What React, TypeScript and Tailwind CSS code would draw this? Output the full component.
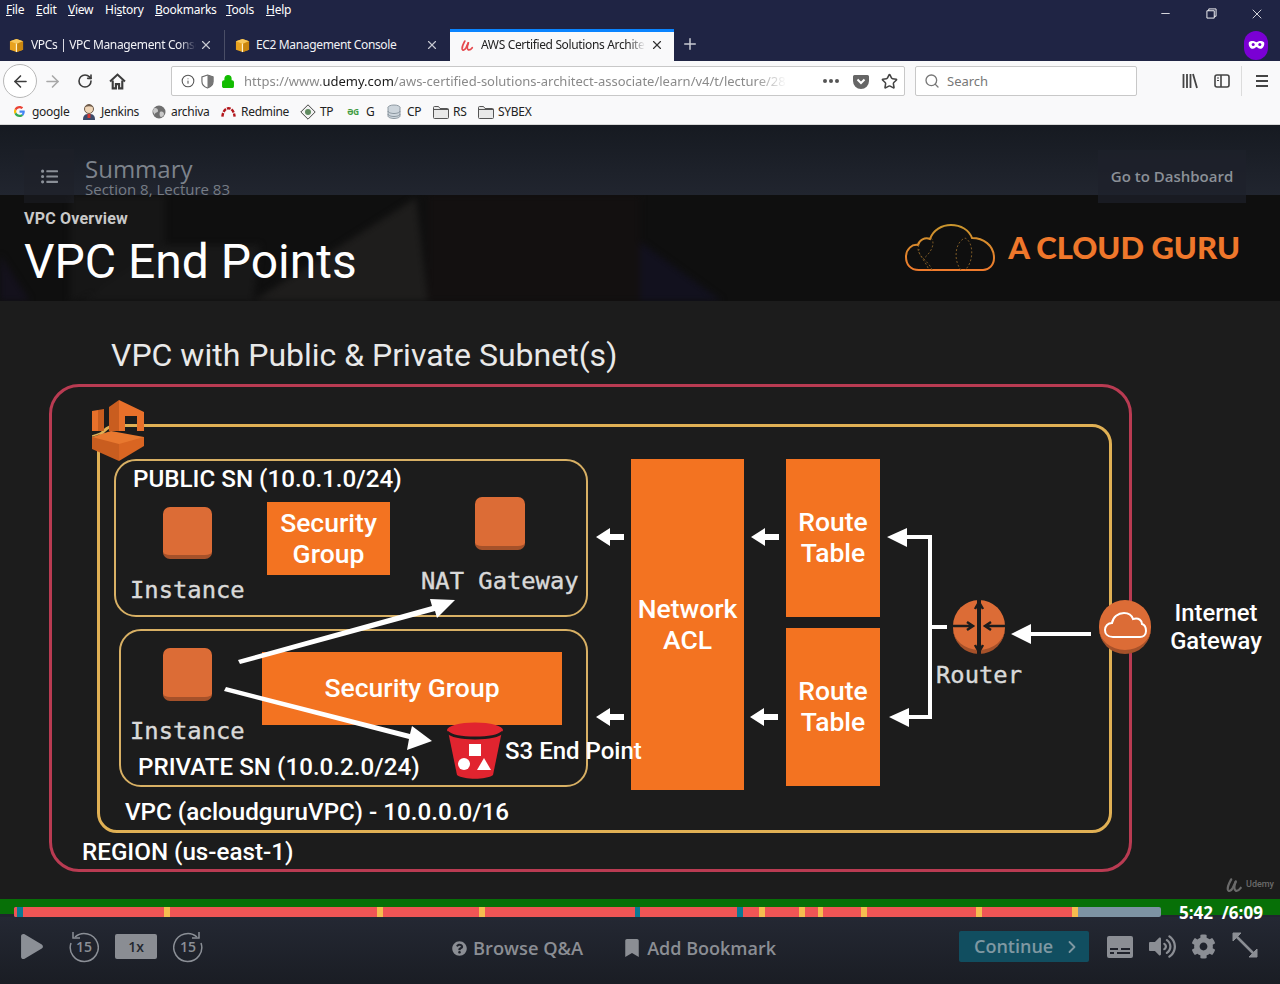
import React from 'react';
import { ArrowLeft, ArrowRight, RotateCw, Info, Lock, Star, Search, X, Plus, Minus, ChevronRight } from 'lucide-react';
import { FaBookmark, FaCog, FaListUl, FaPlay, FaQuestionCircle, FaVolumeUp } from 'react-icons/fa';

const chromeFont = "font-['Noto_Sans',sans-serif]";

function Box3d({ className }: { className: string }) {
  return (
    <svg viewBox="0 0 16 16" className={className}>
      <path d="M8 1 15 3.500V12.500L8 15 1 12.500V3.500Z" fill="#e8a21f" />
      <path d="M8 1 15 3.500 8 6 1 3.500Z" fill="#f7c85c" />
      <path d="M7.300 6H8.700V15H7.300Z" fill="#fff3cf" />
      <path d="M8.700 6 15 3.500V12.500L8.700 15Z" fill="#c9860f" />
    </svg>
  );
}

function UdemyMark({ className, color }: { className: string; color: string }) {
  return (
    <svg viewBox="0 0 16 14" className={className} fill="none" stroke={color} strokeWidth="2" strokeLinecap="round">
      <path d="M5.500 2 C4 5 2 8 2.500 11 C3 13 5.500 12.500 7 9.500 L9.500 4" />
      <path d="M9.500 4 C8 8 8 11 9.500 12 C11 12.500 12.500 11.500 14 9.500" />
    </svg>
  );
}

function Folder() {
  return (
    <svg viewBox="0 0 16 14" className="w-4 h-[14px]" fill="#e9e9e9" stroke="#555" strokeWidth="1">
      <path d="M.5 2.500a1 1 0 0 1 1-1h4l1.500 2h7.500a1 1 0 0 1 1 1v8a1 1 0 0 1-1 1h-13a1 1 0 0 1-1-1Z" />
      <path d="M.5 4.500h15" />
    </svg>
  );
}

function MenuBar() {
  const items = [
    ['F', 'ile', 'w-[30px]'],
    ['E', 'dit', 'w-[32px]'],
    ['V', 'iew', 'w-[37px]'],
    ['Hi', 'story', 'w-[50px]'],
    ['B', 'ookmarks', 'w-[71px]'],
    ['T', 'ools', 'w-[40px]'],
    ['H', 'elp', 'w-[30px]'],
  ];
  return (
    <div className="h-[29px] flex items-start">
      <div className="flex pl-[6px] pt-[1px] text-[12px] leading-[17px] tracking-[-0.25px] text-white">
        {items.map(([a, b, w], i) => (
          <span key={i} className={w}>
            {a === 'Hi' ? (
              <>
                Hi<span className="underline">s</span>tory
              </>
            ) : (
              <>
                <span className="underline">{a}</span>
                {b}
              </>
            )}
          </span>
        ))}
      </div>
      <div className="ml-auto flex items-center h-[29px] text-white">
        <div className="w-[46px] flex justify-center pb-[2px]">
          <Minus className="w-[13px] h-[13px]" strokeWidth={1.500} />
        </div>
        <div className="w-[46px] flex justify-center pb-[2px]">
          <svg viewBox="0 0 12 12" className="w-[11px] h-[11px]" fill="none" stroke="#fff" strokeWidth="1">
            <path d="M3 3V1h8v8H9" />
            <path d="M1 3h8v8H1Z" />
          </svg>
        </div>
        <div className="w-[46px] flex justify-center pb-[2px]">
          <X className="w-[16px] h-[16px]" strokeWidth={1.200} />
        </div>
      </div>
    </div>
  );
}

function TabStrip() {
  return (
    <div className="h-[32px] flex items-stretch text-[12px] tracking-[-0.35px]">
      <div className="w-[225px] flex items-center pl-[9px] border-r border-[#4a4e66] my-[1px] text-[#f2f2f6]">
        <Box3d className="w-[15px] h-[15px] shrink-0" />
        <span className="ml-[7px] w-[165px] overflow-hidden whitespace-nowrap [mask-image:linear-gradient(to_right,#000_90%,transparent)]">
          VPCs | VPC Management Console
        </span>
        <X className="w-[14px] h-[14px] text-[#c5c7d0] ml-[3px] shrink-0" strokeWidth={2} />
      </div>
      <div className="w-[225px] flex items-center pl-[10px] text-[#f2f2f6]">
        <Box3d className="w-[15px] h-[15px] shrink-0" />
        <span className="ml-[6px] w-[169px] whitespace-nowrap">EC2 Management Console</span>
        <X className="w-[14px] h-[14px] text-[#c5c7d0] shrink-0" strokeWidth={2} />
      </div>
      <div className="w-[224px] bg-[#f9f9fa] border-t-[3px] border-[#0a84ff] flex items-center pl-[10px] pb-[3px] text-[#222]">
        <UdemyMark className="w-[14px] h-[13px] shrink-0" color="#e5484d" />
        <span className="ml-[7px] w-[164px] overflow-hidden whitespace-nowrap [mask-image:linear-gradient(to_right,#000_90%,transparent)]">
          AWS Certified Solutions Architect
        </span>
        <X className="w-[14px] h-[14px] text-[#333] ml-[5px] shrink-0" strokeWidth={2} />
      </div>
      <div className="w-[32px] flex items-center justify-center pb-[2px]">
        <Plus className="w-[18px] h-[18px] text-[#c9cad2]" strokeWidth={2} />
      </div>
      <div className="ml-auto mr-[12px] flex items-center">
        <div className="w-[24px] h-[29px] rounded-full bg-[#7a00d4] flex items-center justify-center">
          <svg viewBox="0 0 18 10" className="w-[17px] h-[10px]">
            <path d="M1 2c3-2 5-1 8 0 3-1 5-2 8 0 1 3-1 7-4 7-2 0-3-2-4-2s-2 2-4 2C2 9 0 5 1 2Z" fill="#fff" />
            <circle cx="5.500" cy="4.500" r="1.600" fill="#7a00d4" />
            <circle cx="12.500" cy="4.500" r="1.600" fill="#7a00d4" />
          </svg>
        </div>
      </div>
    </div>
  );
}

function NavBar() {
  return (
    <div className="h-[36px] pt-[4px] flex items-center text-[#444]">
      <div className="ml-[3px] w-[34px] h-[34px] rounded-full border border-[#b8b8b8] bg-white flex items-center justify-center">
        <ArrowLeft className="w-[19px] h-[19px] text-[#3c3c3c]" strokeWidth={2} />
      </div>
      <ArrowRight className="ml-[6px] w-[19px] h-[19px] text-[#a8a8a8]" strokeWidth={2} />
      <RotateCw className="ml-[15px] w-[16px] h-[16px] text-[#3c3c3c]" strokeWidth={2.400} />
      <svg viewBox="0 0 16 16" className="ml-[16px] w-[17px] h-[17px]" fill="none" stroke="#3c3c3c" strokeWidth="2">
        <path d="M1 8 8 1.500 15 8" />
        <path d="M3.500 7v7.500h3v-4h3v4h3V7" />
      </svg>
      <div className="ml-[45px] w-[734px] h-[30px] bg-white border border-[#c8c8c8] rounded-[2px] flex items-center">
        <Info className="ml-[9px] w-[14px] h-[14px] text-[#555]" strokeWidth={1.800} />
        <svg viewBox="0 0 14 16" className="ml-[6px] w-[13px] h-[15px]">
          <path d="M7 1 13 3V8c0 4-3 6-6 7-3-1-6-3-6-7V3Z" fill="#fff" stroke="#666" strokeWidth="1.200" />
          <path d="M7 1 13 3V8c0 4-3 6-6 7Z" fill="#777" />
        </svg>
        <Lock className="ml-[7px] w-[14px] h-[15px] text-[#12bc00]" fill="#12bc00" strokeWidth={2.400} />
        <span className="ml-[9px] mt-[2px] w-[543px] overflow-hidden whitespace-nowrap text-[13px] text-[#8a8a8a] [mask-image:linear-gradient(to_right,#000_94%,transparent)]">
          https://www.<span className="text-[#1a1a1a]">udemy.com</span>/aws-certified-solutions-architect-associate/learn/v4/t/lecture/2814
        </span>
        <div className="ml-[36px] flex gap-[2px]">
          <span className="w-[4px] h-[4px] rounded-full bg-[#555]" />
          <span className="w-[4px] h-[4px] rounded-full bg-[#555]" />
          <span className="w-[4px] h-[4px] rounded-full bg-[#555]" />
        </div>
        <svg viewBox="0 0 16 15" className="ml-[14px] w-[16px] h-[15px]">
          <path d="M1.500 1h13A1.500 1.500 0 0 1 16 2.500V7a8 8 0 0 1-16 0V2.500A1.500 1.500 0 0 1 1.500 1Z" fill="#666" />
          <path d="M4.500 5.500 8 9l3.500-3.500" stroke="#fff" strokeWidth="2" fill="none" />
        </svg>
        <Star className="ml-[12px] w-[17px] h-[17px] text-[#444]" strokeWidth={2.200} />
      </div>
      <div className="ml-[10px] w-[222px] h-[30px] bg-white border border-[#c8c8c8] rounded-[2px] flex items-center">
        <Search className="ml-[8px] w-[16px] h-[16px] text-[#777]" strokeWidth={2} />
        <span className="ml-[7px] mt-[2px] text-[13px] text-[#777]">Search</span>
      </div>
      <svg viewBox="0 0 16 16" className="ml-[45px] w-[16px] h-[16px]" fill="none" stroke="#444" strokeWidth="1.800">
        <path d="M1.500 1v14M5 1v14M8.500 1v14M11 1l4 14" />
      </svg>
      <svg viewBox="0 0 16 16" className="ml-[16px] w-[16px] h-[16px]" fill="none" stroke="#444" strokeWidth="1.600">
        <rect x="1" y="2" width="14" height="12" rx="2" />
        <path d="M7 2v12" />
        <path d="M3 5h2M3 7.500h2" strokeWidth="1" />
      </svg>
      <div className="ml-[11px] w-px h-[30px] bg-[#dcdcdc]" />
      <div className="ml-[14px] flex flex-col gap-[3px]">
        <span className="w-[12px] h-[2px] bg-[#444]" />
        <span className="w-[12px] h-[2px] bg-[#444]" />
        <span className="w-[12px] h-[2px] bg-[#444]" />
      </div>
    </div>
  );
}

function BookmarksBar() {
  return (
    <div className="h-[28px] flex items-center pt-[2px] border-b border-[#d8d8d8] text-[12px] tracking-[-0.3px] text-[#222] whitespace-nowrap">
      <div className="ml-[14px] w-[68px] flex items-center gap-[7px]">
        <svg viewBox="0 0 48 48" className="w-[11px] h-[11px] shrink-0">
          <path fill="#EA4335" d="M24 9.500c3.500 0 6.700 1.300 9.100 3.500l6.800-6.800C35.800 2.400 30.200 0 24 0 14.600 0 6.500 5.400 2.600 13.200l7.900 6.100C12.400 13.700 17.700 9.500 24 9.500Z" />
          <path fill="#4285F4" d="M47 24.500c0-1.600-.2-3.100-.4-4.500H24v9h12.900c-.6 3-2.200 5.500-4.700 7.200l7.700 6c4.500-4.200 7.100-10.400 7.100-17.700Z" />
          <path fill="#FBBC05" d="M10.500 28.700a14.500 14.500 0 0 1 0-9.300l-7.900-6.200a24 24 0 0 0 0 21.600l7.900-6.100Z" />
          <path fill="#34A853" d="M24 48c6.500 0 11.900-2.100 15.900-5.800l-7.700-6c-2.200 1.500-5 2.300-8.200 2.300-6.300 0-11.600-4.200-13.500-9.800l-7.900 6.100C6.500 42.600 14.600 48 24 48Z" />
        </svg>
        google
      </div>
      <div className="w-[70px] flex items-center gap-[5px]">
        <svg viewBox="0 0 14 16" className="w-[14px] h-[16px] shrink-0">
          <circle cx="7" cy="5" r="4.500" fill="#f0d6b8" stroke="#6d5a4a" />
          <path d="M3 3c1-3 7-3 8 0-3-1-5-1-8 0Z" fill="#6d5a4a" />
          <path d="M1 16c0-5 2-6 6-6s6 1 6 6Z" fill="#3d4a6a" />
          <path d="M5.500 10h3v4h-3Z" fill="#d33833" />
        </svg>
        Jenkins
      </div>
      <div className="w-[69px] flex items-center gap-[5px]">
        <svg viewBox="0 0 14 14" className="w-[14px] h-[14px] shrink-0">
          <circle cx="7" cy="7" r="6.500" fill="#6f6f6f" />
          <path d="M3 3c2 0 3 1 3 3S3 7 3 9 1 7 1 6s1-3 2-3ZM8 7c2-1 4 0 4 2s-2 3-3 3-2-3-1-5Z" fill="#c9c9c9" />
        </svg>
        archiva
      </div>
      <div className="w-[79px] flex items-center gap-[5px]">
        <svg viewBox="0 0 16 12" className="w-[15px] h-[12px] shrink-0" fill="none" stroke="#b3161b" strokeWidth="2.600" strokeDasharray="4 1.200">
          <path d="M1.500 11C2 5 5 2 8 2s6 3 6.500 9" />
        </svg>
        Redmine
      </div>
      <div className="w-[47px] flex items-center gap-[4px]">
        <svg viewBox="0 0 16 16" className="w-[16px] h-[16px] shrink-0">
          <path d="M8 .8 15.200 8 8 15.200.8 8Z" fill="#f2f2f2" stroke="#444" />
          <circle cx="8" cy="8" r="3" fill="#5f8a5f" />
        </svg>
        TP
      </div>
      <div className="w-[40px] flex items-center gap-[6px]">
        <span className="w-[13px] text-[8px] text-[#3f9b3f] font-bold leading-none shrink-0">ƏG</span>
        G
      </div>
      <div className="w-[46px] flex items-center gap-[6px]">
        <svg viewBox="0 0 14 16" className="w-[14px] h-[16px] shrink-0" fill="#cdd5dc" stroke="#7a8691" strokeWidth=".8">
          <ellipse cx="7" cy="3.500" rx="6" ry="2.500" />
          <path d="M1 3.500V12c0 1.500 3 2.500 6 2.500s6-1 6-2.500V3.500" />
          <path d="M1 7c0 1.500 3 2.500 6 2.500S13 8.500 13 7M1 10c0 1.500 3 2.500 6 2.500s6-1 6-2.500" fill="none" />
        </svg>
        CP
      </div>
      <div className="w-[45px] flex items-center gap-[4px]">
        <Folder />
        RS
      </div>
      <div className="flex items-center gap-[4px]">
        <Folder />
        SYBEX
      </div>
    </div>
  );
}

function LectureHeader() {
  return (
    <div className="h-[70px] bg-gradient-to-b from-[#161a21] to-[#21252f] flex font-['Open_Sans',sans-serif] relative">
      <div className="absolute left-[24px] top-[24px] w-[50px] h-[54px] bg-[#1d2028]/50 flex items-center justify-center z-10">
        <FaListUl className="w-[17px] h-[17px] text-[#8a8f97]" />
      </div>
      <div className="relative z-10 ml-[85px] pt-[32px]">
        <div className="text-[24px] leading-[24px] text-[#7d838c]">Summary</div>
        <div className="text-[15px] leading-[16px] text-[#767c85] whitespace-nowrap">Section 8, Lecture 83</div>
      </div>
      <div className="absolute left-[1098px] top-[25px] w-[148px] h-[53px] bg-[#1e212b]/70 flex items-center justify-center text-[15px] font-semibold text-[#8b9097] z-10">
        Go to Dashboard
      </div>
    </div>
  );
}

function SlideHeader() {
  return (
    <div className="h-[106px] bg-[#0f0f0f] relative overflow-hidden flex justify-between font-['Roboto',sans-serif]">
      {/* blurred speaker photo behind the slide title */}
      <svg viewBox="0 0 1280 106" className="absolute inset-0 w-[1280px] h-[106px] blur-[3px]">
        <path d="M70 0H165V60L75 106H70Z" fill="#161616" />
        <path d="M80 106 165 50H260L253 106Z" fill="#181818" />
        <path d="M253 106 416 3 428 106Z" fill="#1e1d1c" />
        <path d="M428 0H640V106H428Z" fill="#131010" />
        <path d="M0 106V60L30 106Z" fill="#14111c" />
        <path d="M640 47 722 106H640Z" fill="#12111e" />
      </svg>
      <div className="relative pl-[24px]">
        <div className="pt-[14px] text-[16px] leading-[20px] tracking-[0.2px] font-bold text-[#c9c9c9]">VPC Overview</div>
        <div className="mt-[6px] text-[48px] leading-[56px] -translate-y-px text-white">VPC End Points</div>
      </div>
      <div className="relative flex items-start pt-[28px] pr-[40px]">
        <svg viewBox="0 0 90 50" className="w-[90px] h-[50px]" fill="none">
          <defs>
            <linearGradient id="cloudStroke" x1="0" y1="0" x2="0" y2="1">
              <stop offset="0" stopColor="#c9952d" />
              <stop offset="1" stopColor="#ef7b2c" />
            </linearGradient>
          </defs>
          <path
            d="M14 47C5 47 1 41 1 34c0-8 6-13 12-12 1-5 7-8 12-6 3-9 12-14 21-14 10 0 18 5 21 13 11 0 22 7 22 20 0 7-5 12-11 12Z"
            stroke="url(#cloudStroke)"
            strokeWidth="2"
          />
          <path
            d="M14 22c-4 7 5 13 10 25M27 47C24 38 12 33 14 26M26 15c5 5 0 15-8 21M56 47c-8-10-6-28 4-32 9 4 9 24 0 32"
            stroke="#7d5a26"
            strokeWidth="1"
            strokeDasharray="2 2"
          />
        </svg>
        <div className="ml-[13px] mt-[6px] text-[31px] leading-[36px] font-black text-[#ef772b] font-['Lato',sans-serif] whitespace-nowrap">
          A CLOUD GURU
        </div>
      </div>
    </div>
  );
}

function Ec2Square({ className }: { className: string }) {
  return <div className={`absolute rounded-[7px] bg-[#dc6c36] border-b-[4px] border-[#a5512a] ${className}`} />;
}

function OrangeBox({ className, lines }: { className: string; lines: string[] }) {
  return (
    <div className={`absolute bg-[#f37321] flex flex-col items-center justify-center pb-[2px] text-white font-medium text-[26.500px] leading-[31px] ${className}`}>
      {lines.map((l) => (
        <span key={l} className="whitespace-nowrap">
          {l}
        </span>
      ))}
    </div>
  );
}

function Diagram() {
  const label = 'absolute text-white font-medium whitespace-nowrap';
  const mono =
    "absolute font-['DejaVu_Sans_Mono',monospace] text-[23.800px] leading-[28px] text-[#d9d9d9] [-webkit-text-stroke:0.4px_#d9d9d9] whitespace-nowrap";
  return (
    <div className="relative h-[598px] bg-[#1c1c1c] overflow-hidden font-['Roboto',sans-serif]">
      <div className="absolute left-[111px] top-[35px] text-[32px] leading-[38px] text-[#e9e9e9] whitespace-nowrap">
        VPC with Public &amp; Private Subnet(s)
      </div>

      <div className="absolute left-[49px] top-[83px] w-[1083px] h-[488px] rounded-[30px] border-[3px] border-[#b93b52]" />
      <div className="absolute left-[97px] top-[123px] w-[1015px] h-[409px] rounded-[20px] border-[3px] border-[#e0b054]" />
      <div className="absolute left-[114px] top-[158px] w-[474px] h-[158px] rounded-[22px] border-2 border-[#d8b064]" />
      <div className="absolute left-[119px] top-[328px] w-[469px] h-[158px] rounded-[22px] border-2 border-[#d8b064]" />

      <svg viewBox="0 0 52 61" className="absolute left-[92px] top-[99px] w-[52px] h-[61px]">
        <path d="M0 11 6 10V31H0Z" fill="#e8702a" />
        <path d="M6 10 12 9V31H6Z" fill="#c95d1f" />
        <path d="M17 7 27 0V31H17Z" fill="#c95d1f" />
        <path d="M27 0 52 12V31H45V16H33V31H27Z" fill="#e8702a" />
        <path d="M0 37H27V61L0 49Z" fill="#c95d1f" />
        <path d="M27 37H52V46L27 61Z" fill="#d96522" />
        <path d="M0 37 19 31 52 37 27 44Z" fill="#e8782f" />
        <path d="M0 36C8 34 12 32 15 29" stroke="#e0b054" strokeWidth="1.500" fill="none" />
      </svg>

      <div className={`${label} left-[133px] top-[163px] text-[24.200px] leading-[30px]`}>PUBLIC SN (10.0.1.0/24)</div>
      <Ec2Square className="left-[163px] top-[206px] w-[49px] h-[52px]" />
      <div className={`${mono} left-[130px] top-[275px]`}>Instance</div>
      <OrangeBox className="left-[267px] top-[201px] w-[123px] h-[73px]" lines={['Security', 'Group']} />
      <Ec2Square className="left-[475px] top-[196px] w-[50px] h-[53px]" />
      <div className={`${mono} left-[421px] top-[266px]`}>NAT Gateway</div>

      <Ec2Square className="left-[163px] top-[347px] w-[49px] h-[53px]" />
      <OrangeBox className="left-[262px] top-[351px] w-[300px] h-[73px]" lines={['Security Group']} />
      <div className={`${mono} left-[130px] top-[416px]`}>Instance</div>
      <div className={`${label} left-[138px] top-[451px] text-[24.200px] leading-[30px]`}>PRIVATE SN (10.0.2.0/24)</div>

      <svg viewBox="0 0 58 57" className="absolute left-[446px] top-[421px] w-[58px] h-[57px]">
        <path d="M2 9C8 1 50 1 56 9L47 53C40 58 18 58 11 53Z" fill="#e1242f" />
        <ellipse cx="29" cy="8" rx="28" ry="7.500" fill="#e1242f" />
        <path d="M1 10C10 18 48 18 57 10" stroke="#1c1c1c" strokeWidth="3" fill="none" />
        <rect x="23" y="22" width="12" height="12" fill="#fff" />
        <circle cx="18" cy="42" r="6" fill="#fff" />
        <path d="M38 36 45 48H31Z" fill="#fff" />
      </svg>

      <OrangeBox className="left-[631px] top-[158px] w-[113px] h-[331px]" lines={['Network', 'ACL']} />
      <OrangeBox className="left-[786px] top-[158px] w-[94px] h-[158px]" lines={['Route', 'Table']} />
      <OrangeBox className="left-[786px] top-[327px] w-[94px] h-[158px]" lines={['Route', 'Table']} />
      <div className={`${label} left-[505px] top-[436px] text-[24px] leading-[28px]`}>S3 End Point</div>

      <div className={`${label} left-[125px] top-[496px] text-[24.200px] leading-[30px]`}>VPC (acloudguruVPC) - 10.0.0.0/16</div>
      <div className={`${label} left-[82px] top-[536px] text-[24.200px] leading-[30px]`}>REGION (us-east-1)</div>

      {/* arrows and connectors */}
      <svg viewBox="0 0 1280 598" className="absolute inset-0 w-[1280px] h-[598px]">
        <g fill="#fff">
          <path d="M596 236 610 227V233H624V239H610V245Z" />
          <path d="M751 236 765 227V233H779V239H765V245Z" />
          <path d="M596 416 610 407V413H624V419H610V425Z" />
          <path d="M750 416 764 407V413H778V419H764V425Z" />
          <path d="M887 236 907 227V234H928V238H907V246Z" />
          <path d="M889 416 909 407V414H928V418H909V426Z" />
          <path d="M1011 333 1031 323V331H1091V335H1031V343Z" />
          <rect x="928" y="234" width="4" height="184" />
          <rect x="930" y="324" width="17" height="4" />
          <path d="M238 359 432 305 430 298 455 299 437 317 435 310 240 363Z" />
          <path d="M226 386 410 433 412 425 432 440 407 449 409 438 224 390Z" />
        </g>
      </svg>

      <div className="absolute left-[953px] top-[299px] w-[52px] h-[54px] rounded-full bg-[#dc6c36] border-b-[4px] border-[#a5512a]" />
      <svg viewBox="0 0 52 54" className="absolute left-[953px] top-[299px] w-[52px] h-[54px]" fill="none" stroke="#1c1c1c" strokeWidth="2.500">
        <path d="M26 0V54" strokeWidth="4" />
        <path d="M26 2 22 9M26 2 30 9M26 52 22 45M26 52 30 45" />
        <path d="M0 26H20M14 22 20 26 14 30M52 26H32M38 22 32 26 38 30" />
      </svg>
      <div className={`${mono} left-[936px] top-[360px]`}>Router</div>

      <div className="absolute left-[1099px] top-[299px] w-[52px] h-[54px] rounded-full bg-[#dc6c36] border-b-[4px] border-[#a5512a] flex items-center justify-center">
        <svg viewBox="0 0 44 28" className="w-[44px] h-[28px]" fill="none" stroke="#fff" strokeWidth="2">
          <path d="M10 26C4 26 2 22 2 19c0-4 3-7 7-7 1-6 6-10 12-10 5 0 8 3 9 6 6-2 9 2 9 5 3 1 4 4 4 7 0 4-3 6-6 6Z" />
        </svg>
      </div>
      <div className="absolute left-[1170px] top-[298px] w-[92px] text-center text-white font-medium text-[23.800px] leading-[28px]">
        Internet Gateway
      </div>

      <div className="absolute left-[1225px] top-[576px] flex items-center gap-[3px] text-[#6a6a6a] text-[9px] font-medium">
        <UdemyMark className="w-[18px] h-[16px]" color="#6a6a6a" />
        Udemy
      </div>
    </div>
  );
}

function ProgressBar() {
  const segs = [
    { x: 164, w: 6, c: '#f5bd4f' },
    { x: 377, w: 6, c: '#f5bd4f' },
    { x: 479, w: 6, c: '#f5bd4f' },
    { x: 635, w: 5, c: '#0a7a94' },
    { x: 737, w: 6, c: '#0a7a94' },
    { x: 759, w: 6, c: '#f5bd4f' },
    { x: 799, w: 6, c: '#f5bd4f' },
    { x: 818, w: 5, c: '#f5bd4f' },
    { x: 861, w: 6, c: '#f5bd4f' },
    { x: 976, w: 6, c: '#f5bd4f' },
    { x: 1072, w: 6, c: '#f5bd4f' },
    { x: 17, w: 6, c: '#0a7a94' },
  ];
  return (
    <div className="relative z-10 h-[18px] bg-[#21252f]">
      <div className="absolute inset-x-0 top-0 h-[8px] bg-[#077007]" />
      <div className="absolute left-0 top-[8px] w-[14px] h-[7px] bg-[#077007]" />
      <div className="absolute left-[1160px] right-0 top-[8px] h-[8px] bg-[#077007]" />
      <div className="absolute left-[14px] top-[8px] w-[1147px] h-[10px] bg-[#7d93a3] rounded-[2px] overflow-hidden">
        <div className="h-full w-[1059px] bg-[#ef5555]" />
      </div>
      {segs.map((s) => (
        <div key={s.x} className="absolute top-[8px] h-[10px]" style={{ left: s.x, width: s.w, background: s.c }} />
      ))}
      <div className="absolute left-[1179px] top-[4px] text-[17px] leading-[20px] font-bold text-white whitespace-nowrap font-['Open_Sans',sans-serif]">
        5:42 &nbsp;/6:09
      </div>
    </div>
  );
}

function Skip15({ forward }: { forward?: boolean }) {
  return (
    <div className="relative w-[30px] h-[34px] flex items-center justify-center">
      <svg viewBox="0 0 30 34" className={`absolute inset-0 w-[30px] h-[34px] ${forward ? '-scale-x-100' : ''}`} fill="none" stroke="#8b8f96" strokeWidth="1.500">
        <path d="M6 7A14 14 0 1 1 2 13" />
        <path d="M4 2V8H11" />
      </svg>
      <span className="relative text-[14px] font-semibold text-[#8b8f96]">15</span>
    </div>
  );
}

function Controls() {
  return (
    <div className="relative h-[67px] bg-gradient-to-b from-[#242833] to-[#1a1d24] flex items-center text-[#8b8e94] font-['Open_Sans',sans-serif] pb-[8px]">
      <FaPlay className="ml-[21px] w-[22px] h-[25px] text-[#8b8f96]" />
      <div className="ml-[26px]">
        <Skip15 />
      </div>
      <div className="ml-[16px] w-[42px] h-[25px] rounded-[2px] bg-[#8a8d93] flex items-center justify-center text-[14px] font-semibold text-[#23262e]">
        1x
      </div>
      <div className="ml-[16px]">
        <Skip15 forward />
      </div>
      <div className="ml-[249px] mt-[3px] flex items-center gap-[6px] text-[18.300px] font-semibold whitespace-nowrap">
        <FaQuestionCircle className="w-[15px] h-[15px]" />
        Browse Q&amp;A
      </div>
      <div className="ml-[42px] mt-[3px] flex items-center gap-[8px] text-[18px] font-semibold whitespace-nowrap">
        <FaBookmark className="w-[14px] h-[18px]" />
        Add Bookmark
      </div>
      <div className="ml-[183px] w-[130px] h-[31px] rounded-[2px] bg-[#114e60] flex items-center pl-[15px] text-[18px] font-semibold text-[#7f98a2]">
        Continue
        <ChevronRight className="ml-[9px] w-[20px] h-[20px]" strokeWidth={2.200} />
      </div>
      <svg viewBox="0 0 26 22" className="ml-[18px] w-[26px] h-[22px]">
        <rect width="26" height="22" rx="2" fill="#8b8e94" />
        <path d="M3 13H11M14 13H23M3 17H7M10 17H23" stroke="#1f222b" strokeWidth="2" />
      </svg>
      <FaVolumeUp className="ml-[16px] w-[27px] h-[27px]" />
      <FaCog className="ml-[15px] w-[25px] h-[25px]" />
      <svg viewBox="0 0 26 26" className="ml-[16px] -mt-[3px] w-[26px] h-[26px]" fill="#8b8e94" stroke="#8b8e94" strokeWidth="2.500">
        <path d="M4 4 22 22" />
        <path d="M1 1H9L1 9ZM25 25H17L25 17Z" strokeWidth="1" />
      </svg>
    </div>
  );
}

export default function App() {
  return (
    <div className="w-[1280px] h-[984px] overflow-hidden flex flex-col">
      <div className={`h-[125px] bg-[#1f2444] ${chromeFont} flex flex-col`}>
        <MenuBar />
        <TabStrip />
        <div className="bg-[#f9f9fa]">
          <NavBar />
          <BookmarksBar />
        </div>
      </div>
      <LectureHeader />
      <SlideHeader />
      <Diagram />
      <ProgressBar />
      <Controls />
    </div>
  );
}
